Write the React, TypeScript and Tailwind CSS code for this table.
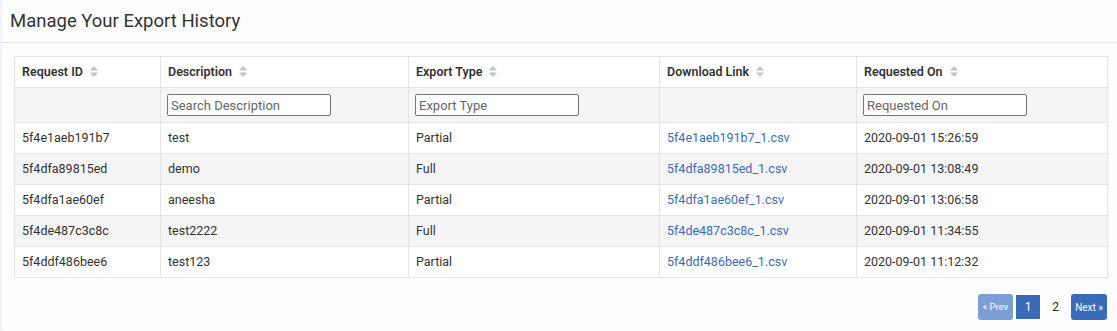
import React from 'react';

const rows = [
  { id: '5f4e1aeb191b7', desc: 'test', type: 'Partial', on: '2020-09-01 15:26:59' },
  { id: '5f4dfa89815ed', desc: 'demo', type: 'Full', on: '2020-09-01 13:08:49' },
  { id: '5f4dfa1ae60ef', desc: 'aneesha', type: 'Partial', on: '2020-09-01 13:06:58' },
  { id: '5f4de487c3c8c', desc: 'test2222', type: 'Full', on: '2020-09-01 11:34:55' },
  { id: '5f4ddf486bee6', desc: 'test123', type: 'Partial', on: '2020-09-01 11:12:32' },
];

const columns = [
  { title: 'Request ID', width: 'w-[146px]' },
  { title: 'Description', width: 'w-[248px]' },
  { title: 'Export Type', width: 'w-[251px]' },
  { title: 'Download Link', width: 'w-[197px]' },
  { title: 'Requested On', width: 'w-[251px]' },
];

const SortIcon = () => (
  <svg width="8" height="11" viewBox="0 0 8 11" className="inline-block ml-[7px] -mt-[2px] align-middle">
    <path d="M4 0 L8 4.5 H0 Z" fill="#c4c4c4" />
    <path d="M4 11 L8 6.5 H0 Z" fill="#c4c4c4" />
  </svg>
);

const FilterInput = ({ placeholder }: { placeholder: string }) => (
  <input
    className="w-[164px] h-[22px] border border-[#767676] rounded-[2px] bg-white px-[3px] text-[13px] text-[#333] placeholder:text-[#666] outline-none"
    placeholder={placeholder}
  />
);

export default function App() {
  return (
    <div className="min-h-screen bg-[#f1f1f8] pl-[2px] font-['Roboto',sans-serif] text-[#333]">
      <div className="h-[331px] bg-[#fdfdfd] rounded-tl-[4px] rounded-bl-[4px]">
        <div className="h-[43px] border-b border-[#e4e4e4] px-[8px] flex items-center">
          <h1 className="text-[18.5px] text-[#333] pt-[1px]">Manage Your Export History</h1>
        </div>
        <div className="pl-[12px] pr-[10px] pt-[13px]">
          <table className="w-[1093px] table-fixed border-collapse text-[12.5px]">
            <thead>
              <tr className="h-[31px] bg-white">
                {columns.map((c) => (
                  <th key={c.title} className={`${c.width} border border-[#e4e4e4] px-[7px] text-left font-semibold text-[#333]`}>
                    {c.title}
                    <SortIcon />
                  </th>
                ))}
              </tr>
              <tr className="h-[35px] bg-[#f5f5f5]">
                <td className="border border-[#e4e4e4] px-[6px]"></td>
                <td className="border border-[#e4e4e4] px-[6px]"><FilterInput placeholder="Search Description" /></td>
                <td className="border border-[#e4e4e4] px-[6px]"><FilterInput placeholder="Export Type" /></td>
                <td className="border border-[#e4e4e4] px-[6px]"></td>
                <td className="border border-[#e4e4e4] px-[6px]"><FilterInput placeholder="Requested On" /></td>
              </tr>
            </thead>
            <tbody>
              {rows.map((r, i) => (
                <tr key={r.id} className={`h-[31px] ${i % 2 === 1 ? 'bg-[#f5f5f5]' : 'bg-white'}`}>
                  <td className="border border-[#e4e4e4] px-[7px]">{r.id}</td>
                  <td className="border border-[#e4e4e4] px-[7px]">{r.desc}</td>
                  <td className="border border-[#e4e4e4] px-[7px]">{r.type}</td>
                  <td className="border border-[#e4e4e4] px-[7px]">
                    <a href="#" className="text-[#3a6cb8]">{r.id}_1.csv</a>
                  </td>
                  <td className="border border-[#e4e4e4] px-[7px]">{r.on}</td>
                </tr>
              ))}
            </tbody>
          </table>
          <div className="flex justify-end items-center mt-[16px] text-[12px]">
            <button className="h-[26px] px-[5px] rounded-[3px] bg-[#7a9fd5] text-white text-[9.5px]">« Prev</button>
            <button className="ml-[3px] h-[24px] w-[24px] bg-[#3a6bb9] text-white">1</button>
            <button className="h-[24px] w-[31px] text-[#222]">2</button>
            <button className="h-[26px] px-[4px] rounded-[3px] bg-[#3a6bb9] text-white text-[10px]">Next »</button>
          </div>
        </div>
      </div>
    </div>
  );
}
